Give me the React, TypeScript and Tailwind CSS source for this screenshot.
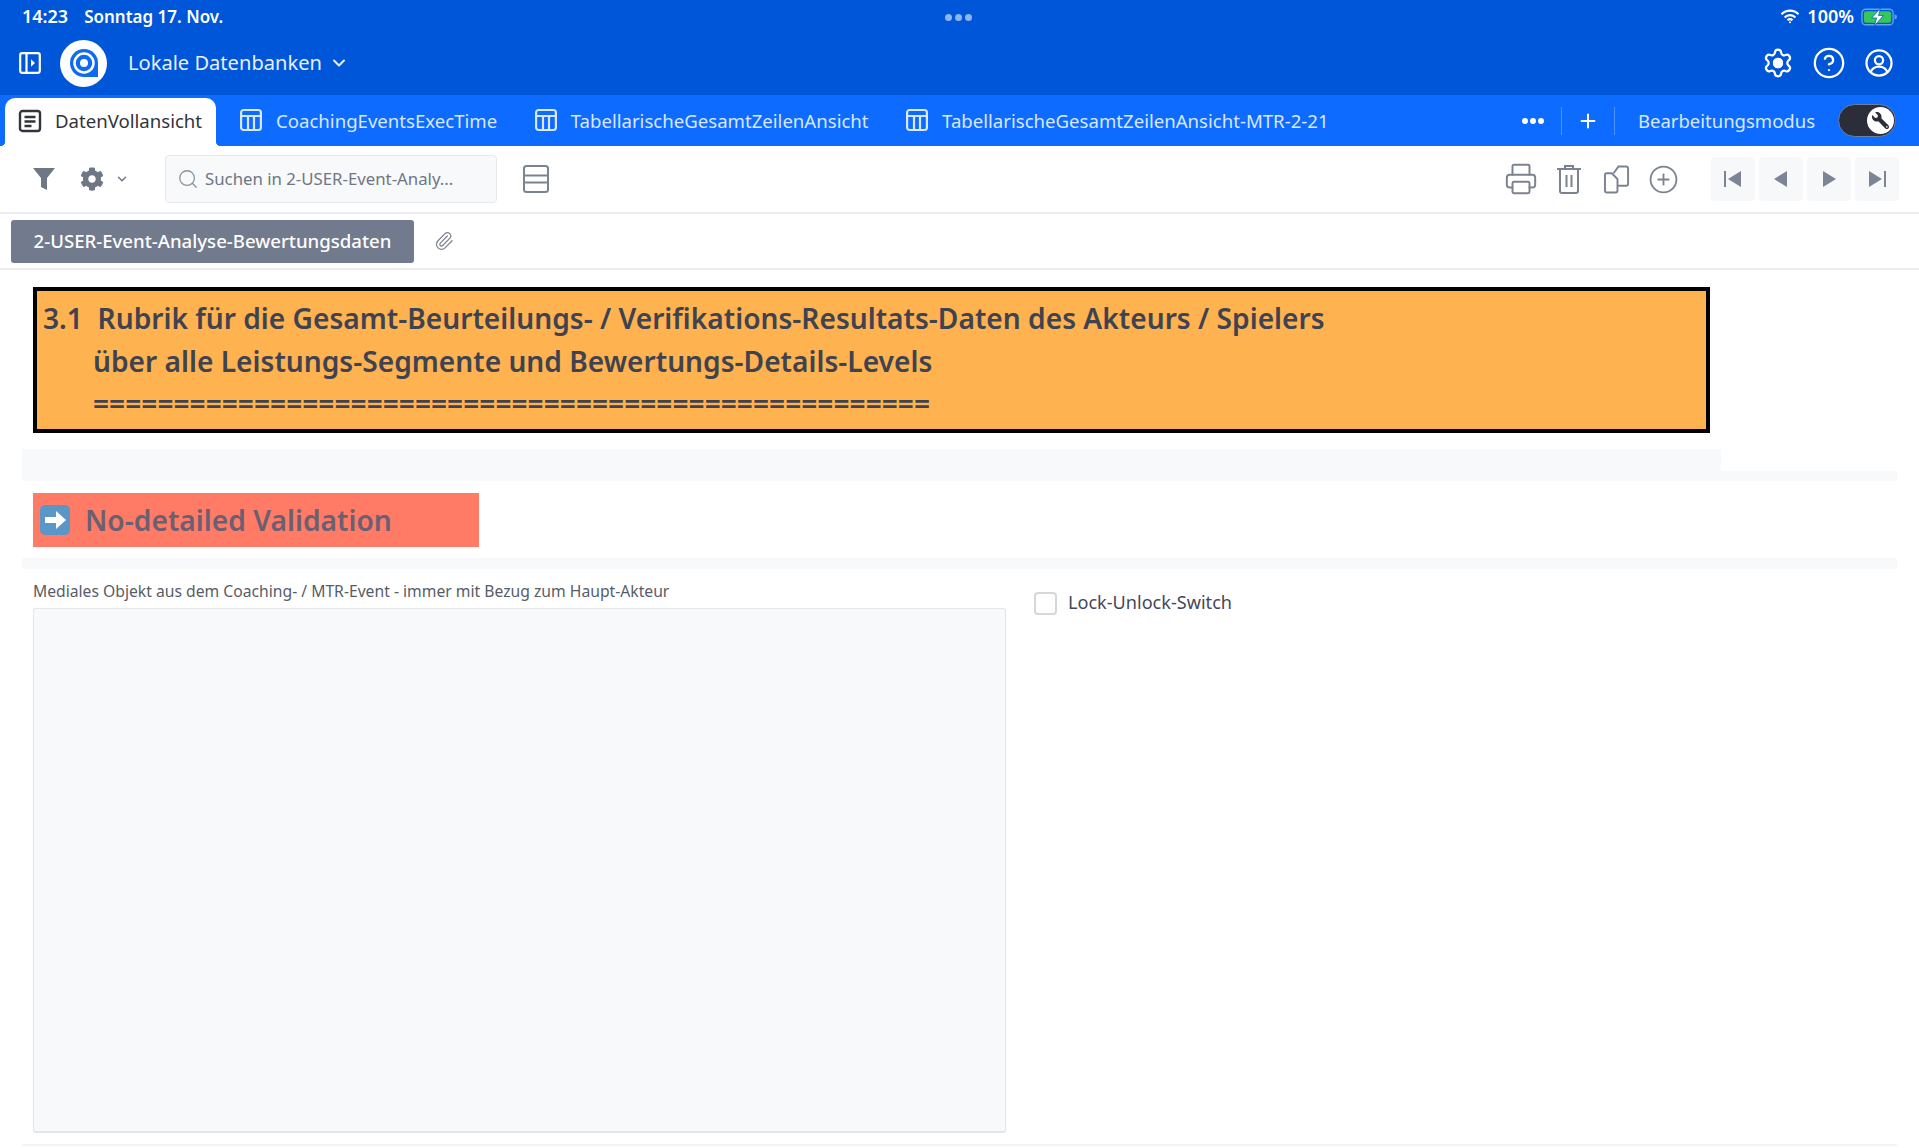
import { ChevronDown, CirclePlus, Printer, Search, Settings, CircleHelp, Paperclip, Plus } from "lucide-react";
import { FaCog, FaWrench } from "react-icons/fa";

const TableIcon = () => (
  <svg width="22" height="24" viewBox="0 0 22 24" fill="none" stroke="currentColor" strokeWidth="2.2" className="shrink-0">
    <rect x="1.100" y="2" width="19.800" height="20" rx="2.500" />
    <path d="M1 8h20M8 8v14M14 8v14" />
  </svg>
);

const FormIcon = () => (
  <svg width="24" height="24" viewBox="0 0 24 24" fill="none" stroke="#33343c" strokeWidth="2.4" className="shrink-0">
    <rect x="2" y="2" width="20" height="20" rx="2.500" />
    <path d="M6.500 8h11M6.500 12.500h11M6.500 17h7" />
  </svg>
);

const Logo = () => (
  <div className="flex h-[47px] w-[47px] items-center justify-center rounded-full bg-white">
    <svg width="30" height="30" viewBox="0 0 30 30">
      <path d="M15 1a14 14 0 1 0 0 28h14V15A14 14 0 0 0 15 1z" fill="#0f6cf0" />
      <circle cx="15" cy="15" r="9.500" fill="none" stroke="#fff" strokeWidth="2.500" />
      <circle cx="15" cy="15" r="4" fill="#fff" />
    </svg>
  </div>
);

const NavButton = ({ d }: { d: string }) => (
  <div className="flex h-[44px] w-[44px] items-center justify-center rounded bg-[#f7f8fa]">
    <svg width="24" height="20" viewBox="0 0 24 20" fill="#7c8595">
      <path d={d} />
    </svg>
  </div>
);

const Tab = ({ label }: { label: string }) => (
  <div className="flex items-center gap-[14px] text-[18.600px] text-[#d9e7ff]">
    <TableIcon />
    <span>{label}</span>
  </div>
);

export default function App() {
  return (
    <div className="min-h-[1148px] overflow-hidden bg-white font-['Noto_Sans',sans-serif] text-[#3f4250]">
      {/* status + app header */}
      <header className="h-[95px] bg-[#0056d8] text-white">
        <div className="relative flex h-[33px] items-center justify-between pl-[22px] pr-[22px] font-semibold">
          <div className="flex items-baseline gap-[16px] text-[17px]">
            <span className="text-[18px]">14:23</span>
            <span>Sonntag 17. Nov.</span>
          </div>
          <div className="absolute left-[945px] top-[14px] flex gap-[3px]">
            <span className="h-[7px] w-[7px] rounded-full bg-[#8db5f0]" />
            <span className="h-[7px] w-[7px] rounded-full bg-[#8db5f0]" />
            <span className="h-[7px] w-[7px] rounded-full bg-[#8db5f0]" />
          </div>
          <div className="flex items-center gap-[7px] text-[18px]">
            <svg width="20" height="15" viewBox="0 0 20 15" fill="none" stroke="#fff" strokeWidth="2.200">
              <path d="M1.500 5.200a12 12 0 0 1 17 0M4.600 8.400a7.600 7.600 0 0 1 10.800 0M7.500 11.200a3.600 3.600 0 0 1 5 0" />
              <circle cx="10" cy="13.300" r="1" fill="#fff" stroke="none" />
            </svg>
            <span>100%</span>
            <svg width="36" height="18" viewBox="0 0 37 18">
              <rect x="1" y="1" width="32" height="16" rx="4" fill="none" stroke="#6d9fe8" strokeWidth="1.400" />
              <rect x="3" y="3" width="28" height="12" rx="2.500" fill="#34c75a" />
              <path d="M34.500 6.500v5a2.500 2.500 0 0 0 0-5z" fill="#6d9fe8" />
              <path d="M20 0 11 10h5l-2 8 9-10.500h-5z" fill="#fff" stroke="#0056d8" strokeWidth="0.800" />
            </svg>
          </div>
        </div>
        <div className="flex h-[62px] items-center justify-between pb-[2px] pl-[19px] pr-[26px]">
          <div className="flex items-center">
            <svg width="22" height="22" viewBox="0 0 22 22" fill="none" stroke="#fff" strokeWidth="2.200">
              <rect x="1.200" y="1.200" width="19.600" height="19.600" rx="2" />
              <path d="M7.500 1.200v19.600" />
              <path d="M12 7.200 16 11l-4 3.800z" fill="#fff" stroke="none" />
            </svg>
            <div className="ml-[19px]">
              <Logo />
            </div>
            <span className="ml-[21px] text-[20.100px] text-[#e6efff]">Lokale Datenbanken</span>
            <ChevronDown size={20} strokeWidth={2.400} className="ml-[7px] text-[#e6efff]" />
          </div>
          <div className="flex items-center">
            <Settings size={32} strokeWidth={1.700}>
              <circle cx="12" cy="12" r="3" fill="#fff" />
            </Settings>
            <CircleHelp size={34} strokeWidth={1.600} className="ml-[18px]" />
            <svg width="28" height="28" viewBox="0 0 30 30" fill="none" stroke="#fff" strokeWidth="2.400" className="ml-[19px]">
              <circle cx="15" cy="15" r="13.400" />
              <circle cx="15" cy="12" r="4.400" />
              <path d="M6 25c1.500-4.500 5-6.200 9-6.200s7.500 1.700 9 6.200" />
            </svg>
          </div>
        </div>
      </header>

      {/* tabs */}
      <nav className="flex h-[51px] items-stretch bg-[#0d6bff] pr-[23px] pt-[3px]">
        <div className="relative ml-[5px] flex w-[211px] items-center gap-[13px] rounded-t-[10px] bg-white pb-[2px] pl-[13px] text-[18.600px] text-[#33343c] before:absolute before:bottom-0 before:left-[-5px] before:h-[5px] before:w-[5px] before:bg-[radial-gradient(circle_at_0_0,transparent_5px,white_5.500px)] after:absolute after:bottom-0 after:right-[-5px] after:h-[5px] after:w-[5px] after:bg-[radial-gradient(circle_at_100%_0,transparent_5px,white_5.500px)]">
          <FormIcon />
          <span>DatenVollansicht</span>
        </div>
        <div className="ml-[24px] flex items-center gap-[37.500px] pb-[3px]">
          <Tab label="CoachingEventsExecTime" />
          <Tab label="TabellarischeGesamtZeilenAnsicht" />
          <Tab label="TabellarischeGesamtZeilenAnsicht-MTR-2-21" />
        </div>
        <div className="ml-auto flex items-center pb-[3px] text-[#d9e7ff]">
          <div className="flex gap-[2px]">
            <span className="h-[6px] w-[6px] rounded-full bg-white" />
            <span className="h-[6px] w-[6px] rounded-full bg-white" />
            <span className="h-[6px] w-[6px] rounded-full bg-white" />
          </div>
          <div className="ml-[17px] h-[28px] w-px bg-[#4d92ff]" />
          <Plus size={22} strokeWidth={2.200} className="mx-[15px] text-white" />
          <div className="h-[28px] w-px bg-[#4d92ff]" />
          <span className="ml-[23px] text-[18.500px]">Bearbeitungsmodus</span>
          <div className="ml-[23px] flex h-[33px] w-[58px] items-center justify-end rounded-full border border-[#6a7fa6] bg-[#2b2d38] pr-[1px]">
            <div className="flex h-[27px] w-[27px] items-center justify-center rounded-full bg-white">
              <FaWrench size={17} className="-scale-x-100 text-[#2b2d38]" />
            </div>
          </div>
        </div>
      </nav>

      {/* toolbar */}
      <div className="flex h-[68px] items-center border-b-2 border-[#ecedf0] pl-[33px] pr-[20px]">
        <svg width="22" height="24" viewBox="0 0 22 24" fill="#6f7684">
          <path d="M0 1h22l-8 10v12l-6-3V11z" />
        </svg>
        <FaCog size={24} className="ml-[25px] text-[#6f7684]" />
        <ChevronDown size={14} strokeWidth={2.500} className="ml-[11px] text-[#6f7684]" />
        <div className="ml-[36px] flex h-[48px] w-[332px] items-center rounded border border-[#e7e9ed] bg-[#f8f9fa] pl-[11px] text-[16.800px] text-[#6f7684]">
          <Search size={22} strokeWidth={1.400} className="text-[#8b909b]" />
          <span className="ml-[6px]">Suchen in 2-USER-Event-Analy...</span>
        </div>
        <svg width="26" height="28" viewBox="0 0 26 28" fill="none" stroke="#7c8390" strokeWidth="2" className="ml-[26px]">
          <rect x="1" y="1" width="24" height="26" rx="2.500" />
          <path d="M1 10.500h24M1 17.500h24" />
        </svg>
        <div className="ml-auto flex items-center text-[#7c8390]">
          <Printer size={34} strokeWidth={1.400} />
          <svg width="26" height="30" viewBox="0 0 26 30" fill="none" stroke="currentColor" strokeWidth="2" className="ml-[18px]">
            <path d="M1 5h24M9 5V2h8v3M4 5v22a2 2 0 0 0 2 2h14a2 2 0 0 0 2-2V5M10.500 11v12M15.500 11v12" />
          </svg>
          <svg width="26" height="30" viewBox="0 0 27 30" fill="none" stroke="currentColor" strokeWidth="2" className="ml-[22px]">
            <path d="M3 9h5l6 6v12a2 2 0 0 1-2 2H3a2 2 0 0 1-2-2V11a2 2 0 0 1 2-2zM10 9l5-7h8a2 2 0 0 1 2 2v16a2 2 0 0 1-2 2h-8" />
          </svg>
          <CirclePlus size={31} strokeWidth={1.400} className="ml-[18px]" />
          <div className="ml-[32px] flex gap-[4px]">
            <NavButton d="M3 2h2v16H3zM20 2v16L7 10z" />
            <NavButton d="M18 2v16L5 10z" />
            <NavButton d="M6 2v16l13-8z" />
            <NavButton d="M4 2v16l13-8zM19 2h2v16h-2z" />
          </div>
        </div>
      </div>

      {/* section name */}
      <div className="flex h-[56px] items-center border-b-2 border-[#ecedf0] pl-[11px]">
        <div className="flex h-[43px] w-[403px] items-center justify-center rounded-[3px] bg-[#727a8e] text-[18.600px] font-medium text-white">
          2-USER-Event-Analyse-Bewertungsdaten
        </div>
        <Paperclip size={20} strokeWidth={1.500} className="ml-[20px] text-[#7c8390]" />
      </div>

      <main className="pl-[22px] pr-[22px] pt-[17px]">
        <div className="ml-[11px] h-[146px] w-[1677px] border-[4px] border-black bg-[#ffb250] pl-[6px] pt-[6px] text-[28.150px] font-semibold leading-[42.500px]">
          <div className="whitespace-pre">3.1  Rubrik für die Gesamt-Beurteilungs- / Verifikations-Resultats-Daten des Akteurs / Spielers</div>
          <div className="pl-[50px]">über alle Leistungs-Segmente und Bewertungs-Details-Levels</div>
          <div className="overflow-hidden whitespace-nowrap pl-[50px]">
            ====================================================
          </div>
        </div>

        <div className="mt-[16px] h-[22px] w-[1699px] bg-[#f8f9fa]" />
        <div className="h-[10px] bg-[#f8f9fa]" />

        <div className="ml-[11px] mt-[12px] flex h-[54px] w-[446px] items-center bg-[#ff7b66] pl-[6px] text-[28.200px] font-semibold text-[#6b5f72]">
          <svg width="32" height="32" viewBox="0 0 32 32" className="shrink-0">
            <rect x="1" y="1" width="30" height="30" rx="5" fill="#5a96c8" />
            <path d="M6 13h11V7l10 9-10 9v-6H6z" fill="#fff" />
          </svg>
          <span className="ml-[14px]">No-detailed Validation</span>
        </div>

        <div className="mt-[11px] h-[11px] bg-[#f8f9fa]" />

        <div className="mt-[11px] flex">
          <div className="ml-[11px] w-[973px]">
            <label className="block text-[15.700px] leading-[22px] text-[#585c68]">
              Mediales Objekt aus dem Coaching- / MTR-Event - immer mit Bezug zum Haupt-Akteur
            </label>
            <div className="mt-[6px] h-[525px] rounded-[3px] border border-b-2 border-[#e4e6ea] bg-[#f8f9fa]" />
          </div>
          <div className="ml-[28px] mt-[3px] flex h-[40px] items-center">
            <div className="h-[23px] w-[23px] rounded-[4px] border-2 border-[#d5d7db] bg-white" />
            <span className="ml-[11px] text-[18.100px] text-[#44475a]">Lock-Unlock-Switch</span>
          </div>
        </div>

        <div className="mt-[11px] h-[2px] bg-[#f3f4f6]" />
      </main>
    </div>
  );
}
